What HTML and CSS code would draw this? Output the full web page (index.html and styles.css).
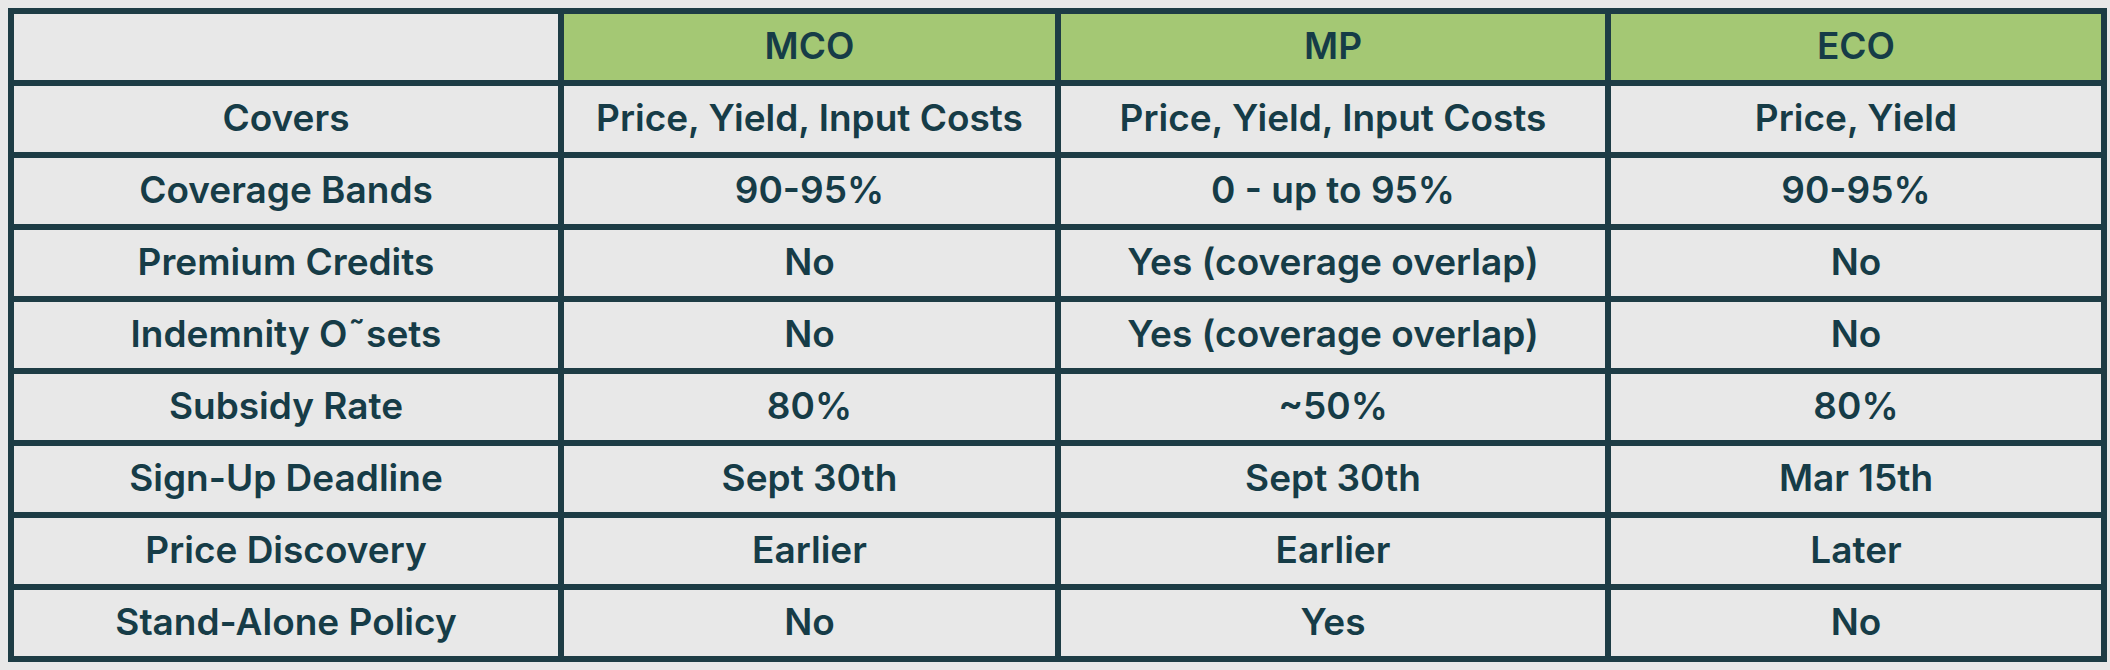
FILE: index.html
```html
<!DOCTYPE html>
<html lang="en">
<head>
<meta charset="utf-8">
<title>Coverage comparison</title>
<link rel="stylesheet" href="styles.css">
</head>
<body>
<div class="grid">
  <div class="cell head blank"></div>
  <div class="cell head">MCO</div>
  <div class="cell head">MP</div>
  <div class="cell head">ECO</div>

  <div class="cell">Covers</div>
  <div class="cell">Price, Yield, Input Costs</div>
  <div class="cell">Price, Yield, Input Costs</div>
  <div class="cell">Price, Yield</div>

  <div class="cell">Coverage Bands</div>
  <div class="cell">90-95%</div>
  <div class="cell">0 - up to 95%</div>
  <div class="cell">90-95%</div>

  <div class="cell">Premium Credits</div>
  <div class="cell">No</div>
  <div class="cell">Yes (coverage overlap)</div>
  <div class="cell">No</div>

  <div class="cell">Indemnity O˜sets</div>
  <div class="cell">No</div>
  <div class="cell">Yes (coverage overlap)</div>
  <div class="cell">No</div>

  <div class="cell">Subsidy Rate</div>
  <div class="cell">80%</div>
  <div class="cell">~50%</div>
  <div class="cell">80%</div>

  <div class="cell">Sign-Up Deadline</div>
  <div class="cell">Sept 30th</div>
  <div class="cell">Sept 30th</div>
  <div class="cell">Mar 15th</div>

  <div class="cell">Price Discovery</div>
  <div class="cell">Earlier</div>
  <div class="cell">Earlier</div>
  <div class="cell">Later</div>

  <div class="cell">Stand-Alone Policy</div>
  <div class="cell">No</div>
  <div class="cell">Yes</div>
  <div class="cell">No</div>
</div>
</body>
</html>
```
FILE: styles.css
```css
html, body {
  margin: 0;
  background: #e8e8e8;
}
body {
  padding: 8px;
  font-family: "Inter", "Liberation Sans", sans-serif;
  font-weight: 600;
  color: #163c47;
}
.grid {
  display: grid;
  grid-template-columns: 550px 497px 550px 496px;
  grid-auto-rows: 72px;
  width: 2099px;
  box-sizing: border-box;
  border-top: 6px solid #1d3c45;
  border-left: 6px solid #1d3c45;
}
.cell {
  box-sizing: border-box;
  border-right: 6px solid #1d3c45;
  border-bottom: 6px solid #1d3c45;
  display: flex;
  align-items: center;
  justify-content: center;
  font-size: 37px;
  line-height: 1;
  padding-bottom: 4px;
  white-space: nowrap;
}
.head {
  background: #a4c874;
}
.head.blank {
  background: #e8e8e8;
}
```
